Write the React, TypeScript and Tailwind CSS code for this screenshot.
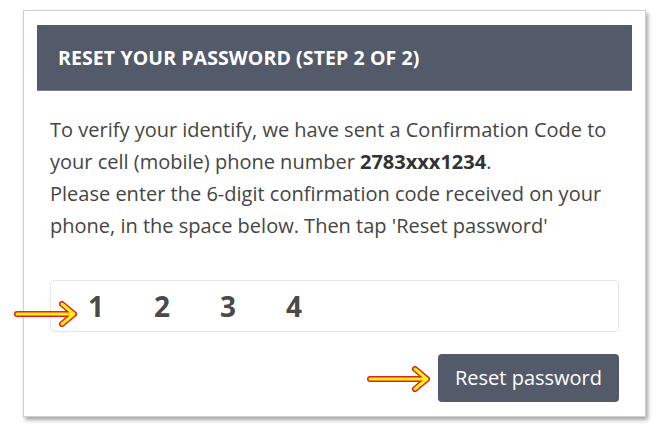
const Arrow = ({ className }: { className: string }) => (
  <svg className={className} width="64" height="26" viewBox="0 0 64 26" fill="none">
    <g strokeLinecap="round" strokeLinejoin="round">
      <path d="M3 13 H60 M48 3 L60 13 L48 23" stroke="#e0201b" strokeWidth="6" />
      <path d="M3 13 H60 M48 3 L60 13 L48 23" stroke="#ffef1a" strokeWidth="3" />
    </g>
  </svg>
);

const ResetPassword = () => {
  const digits = ['1', '2', '3', '4'];

  return (
    <div className="relative min-h-screen bg-white pt-[10px] pl-[23px]" style={{ fontFamily: '"Open Sans", sans-serif' }}>
      <div className="w-[623px] h-[407px] border border-[#cfcfcf] bg-white px-[13px] pt-[14px] shadow-[2px_3px_4px_rgba(0,0,0,0.35)]">
        <div className="h-[66px] bg-[#535b6b] border-b border-[#7b8290] flex items-center pl-[21px]">
          <h1 className="text-white text-[19.5px] font-bold tracking-[0.1px]">RESET YOUR PASSWORD (STEP 2 OF 2)</h1>
        </div>

        <div className="px-[13px] pt-[23px]">
          <p className="text-[#454545] text-[20px] leading-[32px]">
            To verify your identify, we have sent a Confirmation Code to
            <br />
            your cell (mobile) phone number <span className="font-bold text-[#333]">2783xxx1234</span>.
            <br />
            Please enter the 6-digit confirmation code received on your
            <br />
            phone, in the space below. Then tap 'Reset password'
          </p>

          <div className="mt-[38px] h-[52px] border border-[#e6e6e6] rounded-[4px] flex items-center pl-[37px] gap-[50px]">
            {digits.map((d) => (
              <span key={d} className="text-[28px] font-bold text-[#4a4a4a] leading-none">{d}</span>
            ))}
          </div>

          <div className="flex justify-end mt-[22px]">
            <button className="w-[181px] h-[48px] rounded-[4px] bg-[#535b6b] text-white text-[20px]">
              Reset password
            </button>
          </div>
        </div>
      </div>

      <Arrow className="absolute left-[14px] top-[301px]" />
      <Arrow className="absolute left-[367px] top-[366px]" />
    </div>
  );
};

export default function App() {
  return <ResetPassword />;
}
